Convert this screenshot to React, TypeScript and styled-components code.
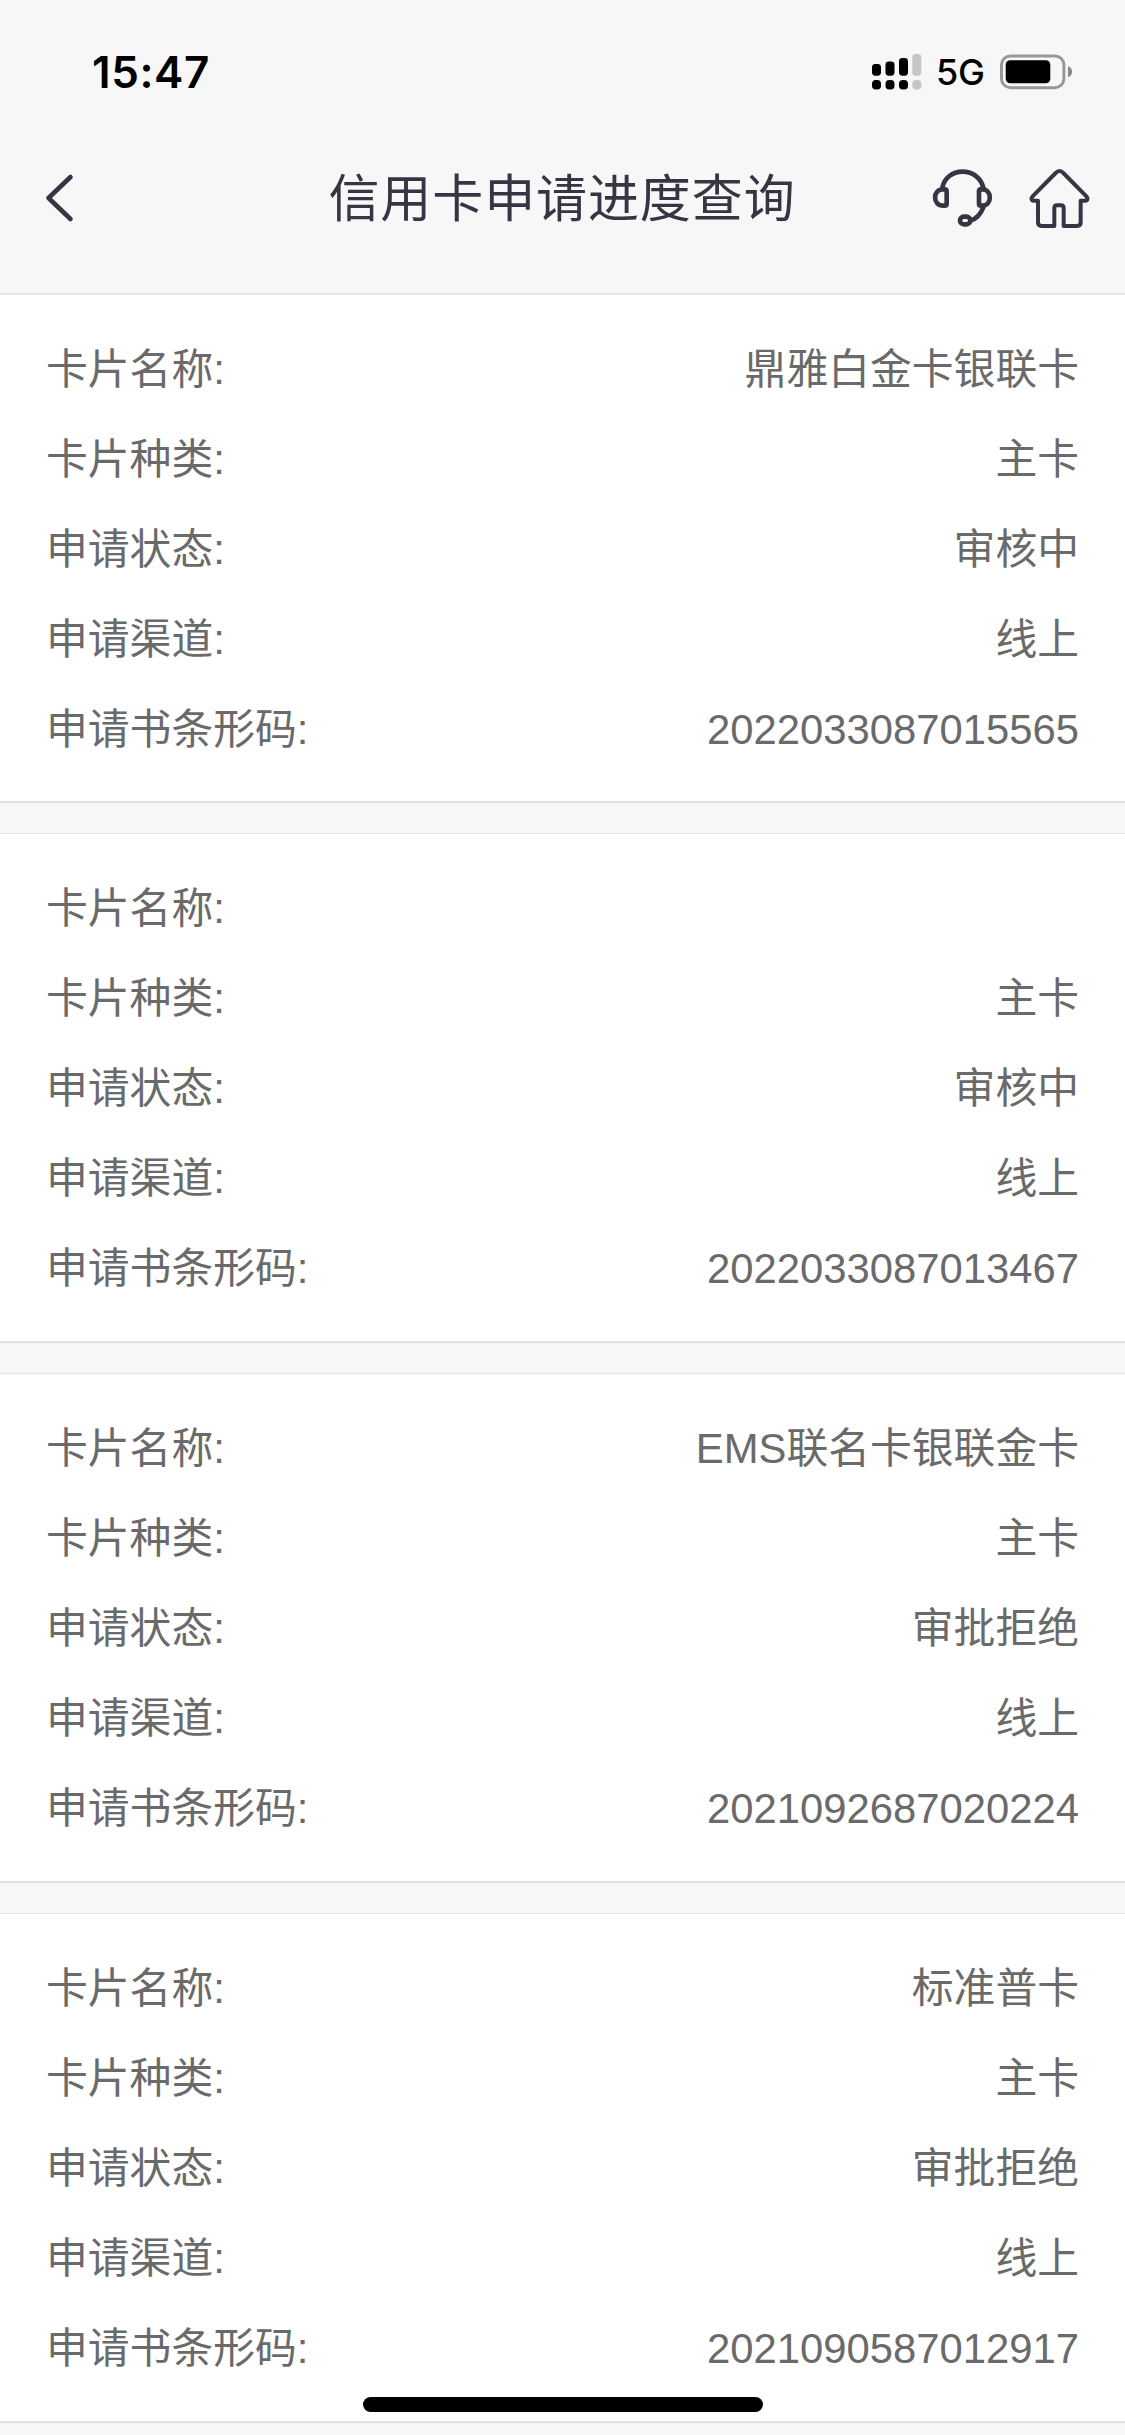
import React from "react";
import styled, { createGlobalStyle } from "styled-components";

const GlobalStyle = createGlobalStyle`
  body { margin: 0; background: #f7f7f7; }
  * { box-sizing: border-box; }
`;

const Screen = styled.div`
  position: relative;
  width: 1125px;
  height: 2435px;
  overflow: hidden;
  background: #f7f7f7;
  font-family: "Liberation Sans", "Noto Sans CJK SC", sans-serif;
`;

const StatusBar = styled.div`
  height: 143px;
  padding: 0 52px 0 92px;
  display: flex;
  justify-content: space-between;
  align-items: center;
  font-family: Inter, sans-serif;
  color: #000;
`;

const Time = styled.div`
  font-size: 44px;
  font-weight: 600;
  line-height: 48px;
  letter-spacing: 0.6px;
`;

const StatusIcons = styled.div`
  display: flex;
  align-items: center;
`;

const Network = styled.span`
  width: 48px;
  margin: 0 16px 0 14px;
  font-size: 36px;
  font-weight: 450;
  line-height: 36px;
  padding-top: 1px;
  letter-spacing: -0.3px;
`;

const NavBar = styled.header`
  display: grid;
  grid-template-columns: 1fr auto 1fr;
  align-items: center;
  height: 152px;
  padding: 0 34px 40px 44px;
  border-bottom: 2px solid #e8e8e8;
  color: #373443;
`;

const Title = styled.h1`
  margin: 0 11px 0 0;
  padding-top: 4px;
  font-size: 51px;
  font-weight: 400;
  line-height: 60px;
  letter-spacing: 0.9px;
`;

const Actions = styled.div`
  display: flex;
  justify-content: flex-end;
  align-items: center;
  gap: 33px;
`;

const Stroke = styled.svg`
  display: block;
  fill: none;
  stroke: currentColor;
  stroke-linecap: round;
  stroke-linejoin: round;
`;

const CardList = styled.main`
  display: flex;
  flex-direction: column;
  gap: 30px;
`;

const Card = styled.section<{ $first?: boolean }>`
  flex: none;
  height: ${(p) => (p.$first ? 509 : 510)}px;
  padding: 30px 46px 0;
  background: #fff;
  border-top: ${(p) => (p.$first ? "0" : "1px solid #e4e4e4")};
  border-bottom: 2px solid #e2e2e2;

  &:first-child {
    height: 508px;
  }
`;

const Row = styled.div`
  display: flex;
  justify-content: space-between;
  align-items: center;
  height: 90px;
  font-size: 41.8px;
  line-height: 60px;
  color: #6a6a6a;
`;

const HomeIndicator = styled.div`
  position: absolute;
  left: 363px;
  bottom: 23px;
  width: 400px;
  height: 15px;
  border-radius: 8px;
  background: #000;
`;

const labels = ["卡片名称:", "卡片种类:", "申请状态:", "申请渠道:", "申请书条形码:"];

const applications = [
  ["鼎雅白金卡银联卡", "主卡", "审核中", "线上", "2022033087015565"],
  ["", "主卡", "审核中", "线上", "2022033087013467"],
  ["EMS联名卡银联金卡", "主卡", "审批拒绝", "线上", "2021092687020224"],
  ["标准普卡", "主卡", "审批拒绝", "线上", "2021090587012917"],
];

const bars = [
  { x: 0, y: 10 },
  { x: 13.5, y: 7.5 },
  { x: 27, y: 4 },
  { x: 40.3, y: 0 },
];

const Signal = () => (
  <svg width="50" height="36" viewBox="0 0 50 36">
    {bars.map(({ x, y }, i) => (
      <g key={x} fill={i === 3 ? "#c6c6c6" : "#000"}>
        <rect x={x} y={y} width="9" height={21.7 - y} rx="3.4" />
        <rect x={x} y="26" width="9" height="9.6" rx="3.8" />
      </g>
    ))}
  </svg>
);

const Battery = () => (
  <svg width="73" height="36" viewBox="0 0 73 36">
    <rect x="1.5" y="1.9" width="62.4" height="31.8" rx="9" fill="none" stroke="#989898" strokeWidth="3" />
    <rect x="5.7" y="6.3" width="44.6" height="23" rx="4.5" fill="#000" />
    <path d="M68 12.3c5.4 1.4 5.4 9.6 0 11z" fill="#8a8a8a" />
  </svg>
);

const BackIcon = () => (
  <Stroke width="32" height="50" viewBox="0 0 32 50" strokeWidth="4.6">
    <path d="M26.5 4 4.5 25l22 21" />
  </Stroke>
);

const HeadsetIcon = () => (
  <Stroke width="65" height="62" viewBox="90 80 195 186" strokeWidth="14">
    <path d="M127 142c6-29 30-48 61-48s55 19 62 48" />
    <path d="M130 147h4q6 0 6 6v37q0 6-6 6h-4c-33 0-33-49 0-49z" />
    <path d="M247 147h-4q-6 0-6 6v37q0 6 6 6h4c30 0 30-49 0-49z" />
    <path d="M250 201c-8 20-18 33-37 39" />
    <rect x="180" y="229" width="31" height="23" rx="11.5" />
  </Stroke>
);

const HomeIcon = () => (
  <Stroke width="63" height="63" viewBox="384 77 189 189" strokeWidth="12">
    <path d="M414 178h-13c-7 0-8-7-4-12l70-71q12-12 23 0l70 71c4 5 3 12-4 12h-14v65q0 11-11 11h-40v-54q0-8-8-8h-12q-8 0-8 8v54h-38q-11 0-11-11z" />
  </Stroke>
);

export default function App() {
  return (
    <>
      <GlobalStyle />
      <Screen>
        <StatusBar>
          <Time>15:47</Time>
          <StatusIcons>
            <Signal />
            <Network>5G</Network>
            <Battery />
          </StatusIcons>
        </StatusBar>
        <NavBar>
          <BackIcon />
          <Title>信用卡申请进度查询</Title>
          <Actions>
            <HeadsetIcon />
            <HomeIcon />
          </Actions>
        </NavBar>
        <CardList>
          {applications.map((values, index) => (
            <Card key={values[4]} $first={index === 0}>
              {labels.map((label, i) => (
                <Row key={label}>
                  <span>{label}</span>
                  <span>{values[i]}</span>
                </Row>
              ))}
            </Card>
          ))}
        </CardList>
        <HomeIndicator />
      </Screen>
    </>
  );
}
